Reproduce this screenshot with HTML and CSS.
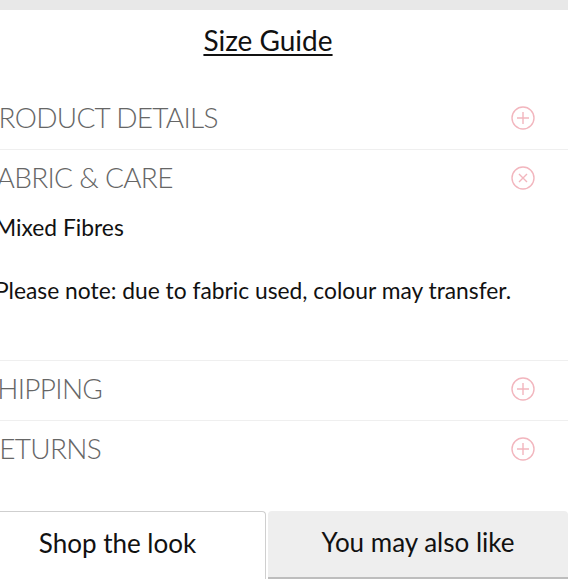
FILE: index.html
```html
<!DOCTYPE html>
<html>
<head>
<meta charset="utf-8">
<link rel="stylesheet" href="styles.css">
</head>
<body>
<div class="topbar"></div>
<div class="page">
  <div class="size-guide"><a class="size-link">Size Guide</a></div>
  <div class="accordion">
    <div class="acc-item">
      <div class="acc-row">
        <span class="acc-title">PRODUCT DETAILS</span>
        <svg class="acc-icon" viewBox="0 0 24 24"><circle cx="12" cy="12" r="11"/><path d="M12 6v12M6 12h12"/></svg>
      </div>
    </div>
    <div class="acc-item open">
      <div class="acc-row">
        <span class="acc-title">FABRIC &amp; CARE</span>
        <svg class="acc-icon" viewBox="0 0 24 24"><circle cx="12" cy="12" r="11"/><path d="M8 8l8 8M16 8l-8 8"/></svg>
      </div>
      <div class="acc-body">
        <p class="acc-text">Mixed Fibres</p>
        <p class="acc-text note">Please note: due to fabric used, colour may transfer.</p>
      </div>
    </div>
    <div class="acc-item">
      <div class="acc-row">
        <span class="acc-title">SHIPPING</span>
        <svg class="acc-icon" viewBox="0 0 24 24"><circle cx="12" cy="12" r="11"/><path d="M12 6v12M6 12h12"/></svg>
      </div>
    </div>
    <div class="acc-item last">
      <div class="acc-row">
        <span class="acc-title">RETURNS</span>
        <svg class="acc-icon" viewBox="0 0 24 24"><circle cx="12" cy="12" r="11"/><path d="M12 6v12M6 12h12"/></svg>
      </div>
    </div>
  </div>
  <div class="tabs">
    <div class="tab active">Shop the look</div>
    <div class="tab">You may also like</div>
  </div>
</div>
</body>
</html>
```
FILE: styles.css
```css
html, body {
  margin: 0;
  padding: 0;
  background: #fff;
  overflow: hidden;
}
body {
  width: 580px;
  height: 580px;
  font-family: Lato, "Noto Sans", sans-serif;
}
.topbar {
  width: 568px;
  height: 10px;
  background: #e8e8e8;
}
.page {
  margin-left: -17px;
  width: 585px;
}
.size-guide {
  padding: 16px 15px 36px 0;
  text-align: center;
  font-size: 28px;
  line-height: 28px;
  height: 28px;
}
.size-link {
  font-weight: 400;
  color: #111;
  text-decoration: underline;
  text-decoration-thickness: 1.5px;
  text-underline-offset: 3px;
}
.acc-item {
  border-bottom: 1px solid #efefef;
}
.acc-item.last {
  border-bottom: none;
}
.acc-row {
  display: flex;
  align-items: center;
  justify-content: space-between;
  height: 30px;
  padding: 12px 33px 17px 0;
}
.acc-title {
  font-size: 28px;
  font-weight: 300;
  line-height: 30px;
  letter-spacing: -0.7px;
  color: #666;
}
.acc-icon {
  width: 24px;
  height: 24px;
  margin-top: 2px;
  fill: none;
  stroke: #f2b6be;
  stroke-width: 1.4;
}
.acc-body {
  padding: 6px 0 58px 12px;
}
.acc-text {
  margin: 0;
  font-size: 22.8px;
  line-height: 24px;
  color: #111;
}
.acc-text.note {
  margin-top: 39px;
}
.tabs {
  display: flex;
  margin-top: 31px;
  margin-left: -13px;
  gap: 2px;
  height: 68px;
}
.tab {
  box-sizing: border-box;
  display: flex;
  align-items: flex-start;
  justify-content: center;
  padding-top: 17px;
  font-size: 26px;
  line-height: 28px;
  color: #111;
}
.tab.active {
  width: 296px;
  background: #fff;
  border-top: 1px solid #cfcfcf;
  border-right: 1px solid #cfcfcf;
  border-top-right-radius: 4px;
}
.tab:not(.active) {
  width: 300px;
  background: #eeeeee;
  border-radius: 4px 4px 0 0;
  box-shadow: 0 2px 0 #bdbdbd;
  height: 66px;
}
```
